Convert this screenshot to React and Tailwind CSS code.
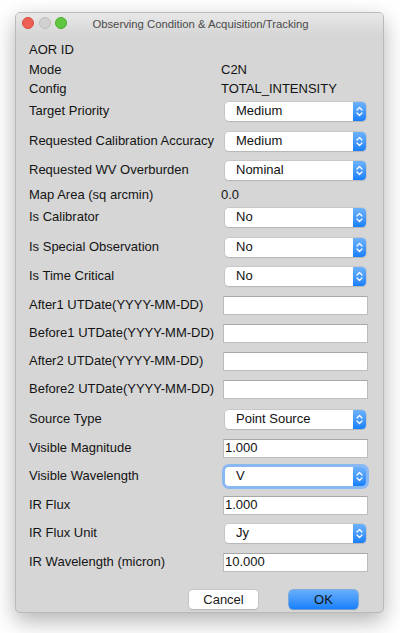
import React from 'react';

const font = { fontFamily: '"Liberation Sans", Arial, sans-serif' };

function Chevrons() {
  return (
    <svg width="7" height="11" viewBox="0 0 7 11" fill="none" stroke="white" strokeWidth="1.3" strokeLinecap="round" strokeLinejoin="round">
      <path d="M1 4 L3.5 1.5 L6 4" />
      <path d="M1 7 L3.5 9.5 L6 7" />
    </svg>
  );
}

function Combo({ value, focused }) {
  return (
    <div className={`ml-[4px] w-[141px] h-[19px] flex rounded-[4px] bg-white shadow-[0_0_0_0.5px_#b8b8b8,0_1px_1px_rgba(0,0,0,0.15)] ${focused ? 'ring-[3px] ring-[#8ab8f3]' : ''}`}>
      <div className="flex-1 flex items-center pl-[11px] text-[13px] text-[#111]">{value}</div>
      <div className="w-[13px] h-full rounded-r-[4px] bg-gradient-to-b from-[#6cb2fb] to-[#1580fb] flex items-center justify-center">
        <Chevrons />
      </div>
    </div>
  );
}

function Field({ value }) {
  return (
    <div className="ml-[2px] w-[145px] h-[19px] bg-white border border-[#bcbcbc] border-t-[#a8a8a8] flex items-center pl-[1px] text-[13px] text-[#111]">
      {value}
    </div>
  );
}

function Row({ h, label, children }) {
  return (
    <div className={`${h} flex items-start`}>
      <div className="h-[20px] flex items-center w-[192px] text-[13px] text-[#141414] whitespace-nowrap">{label}</div>
      <div className="h-[20px] flex items-center">{children}</div>
    </div>
  );
}

export default function App() {
  return (
    <div className="w-[400px] h-[633px] bg-white pt-[12px] pl-[15px]" style={font}>
      <div className="w-[369px] h-[601px] flex flex-col bg-[#d6d6d6] rounded-[5px] border border-[#b9b9b9] shadow-[0_8px_22px_rgba(0,0,0,0.3)] overflow-hidden">
        <div className="h-[22px] relative flex items-center justify-center bg-gradient-to-b from-[#e8e8e8] to-[#d6d6d6] text-[11.3px] text-[#4a4a4a]">
          <div className="absolute left-[6px] top-[4px] flex gap-[4.5px]">
            <div className="w-[12px] h-[12px] rounded-full bg-[#ee5f55] border border-[#d9493f]"></div>
            <div className="w-[12px] h-[12px] rounded-full bg-[#d0d0d0] border border-[#bdbdbd]"></div>
            <div className="w-[12px] h-[12px] rounded-full bg-[#5fc63f] border border-[#4cab2f]"></div>
          </div>
          <span className="pl-[2px]">Observing Condition &amp; Acquisition/Tracking</span>
        </div>
        <div className="flex flex-col pl-[13px] pt-[5px]">
          <Row h="h-[20px]" label="AOR ID" />
          <Row h="h-[19px]" label="Mode"><span className="text-[13px] text-[#141414]">C2N</span></Row>
          <Row h="h-[22px]" label="Config"><span className="text-[13px] text-[#141414]">TOTAL_INTENSITY</span></Row>
          <Row h="h-[30px]" label="Target Priority"><Combo value="Medium" /></Row>
          <Row h="h-[29px]" label="Requested Calibration Accuracy"><Combo value="Medium" /></Row>
          <Row h="h-[25px]" label="Requested WV Overburden"><Combo value="Nominal" /></Row>
          <Row h="h-[22px]" label="Map Area (sq arcmin)"><span className="text-[13px] text-[#141414]">0.0</span></Row>
          <Row h="h-[30px]" label="Is Calibrator"><Combo value="No" /></Row>
          <Row h="h-[29px]" label="Is Special Observation"><Combo value="No" /></Row>
          <Row h="h-[29px]" label="Is Time Critical"><Combo value="No" /></Row>
          <Row h="h-[28px]" label="After1 UTDate(YYYY-MM-DD)"><Field value="" /></Row>
          <Row h="h-[28px]" label="Before1 UTDate(YYYY-MM-DD)"><Field value="" /></Row>
          <Row h="h-[28px]" label="After2 UTDate(YYYY-MM-DD)"><Field value="" /></Row>
          <Row h="h-[30px]" label="Before2 UTDate(YYYY-MM-DD)"><Field value="" /></Row>
          <Row h="h-[29px]" label="Source Type"><Combo value="Point Source" /></Row>
          <Row h="h-[28px]" label="Visible Magnitude"><Field value="1.000" /></Row>
          <Row h="h-[29px]" label="Visible Wavelength"><Combo value="V" focused /></Row>
          <Row h="h-[28px]" label="IR Flux"><Field value="1.000" /></Row>
          <Row h="h-[29px]" label="IR Flux Unit"><Combo value="Jy" /></Row>
          <Row h="h-[20px]" label="IR Wavelength (micron)"><Field value="10.000" /></Row>
        </div>
        <div className="flex justify-end gap-[31px] pr-[25px] mt-[18px]">
          <div className="w-[69px] h-[19px] rounded-[4px] bg-white shadow-[0_0_0_0.5px_#b5b5b5,0_1px_1px_rgba(0,0,0,0.15)] flex items-center justify-center text-[13px] text-[#1a1a1a]">Cancel</div>
          <div className="w-[69px] h-[19px] rounded-[4px] bg-gradient-to-b from-[#65aefa] to-[#1580fb] shadow-[0_0_0_0.5px_#2a7ee8,0_1px_1px_rgba(0,0,0,0.15)] flex items-center justify-center text-[13px] text-[#111]">OK</div>
        </div>
      </div>
    </div>
  );
}
